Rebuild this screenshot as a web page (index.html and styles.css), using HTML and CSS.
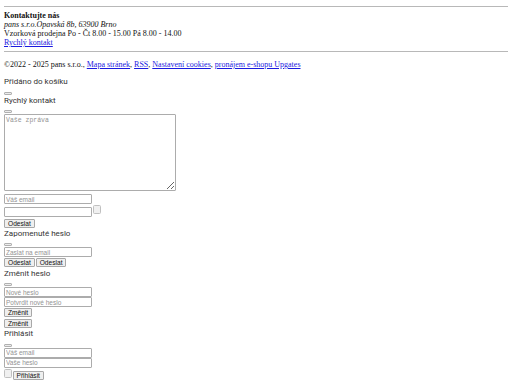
FILE: index.html
```html
<!DOCTYPE html>
<html lang="cs">
<head>
<meta charset="utf-8">
<title>pans s.r.o.</title>
<link rel="stylesheet" href="styles.css">
</head>
<body>
<div class="page">
<hr class="rule rule-top">
<div class="contact">
  <strong>Kontaktujte nás</strong><br>
  <em>pans s.r.o.Opavská 8b, 63900 Brno</em><br>
  Vzorková prodejna Po - Čt 8.00 - 15.00 Pá 8.00 - 14.00<br>
  <a href="#">Rychlý kontakt</a>
</div>
<hr class="rule">
<p class="copy">©2022 - 2025 pans s.r.o., <a href="#">Mapa stránek</a>, <a href="#">RSS</a>, <a href="#">Nastavení cookies</a>, <a href="#">pronájem e-shopu Upgates</a></p>

<div class="ui">
  <section class="modal">
    <div class="modal-title notice">Přidáno do košíku</div>
    <button class="close" type="button"></button>
  </section>

  <section class="modal">
    <div class="modal-title">Rychlý kontakt</div>
    <button class="close" type="button"></button>
    <form class="form form-contact">
      <textarea class="field area" placeholder="Vaše zpráva"></textarea>
      <input class="field f-email" type="text" placeholder="Váš email">
      <div class="row row-check">
        <input class="field" type="text">
        <span class="check"></span>
      </div>
      <div class="row row-send">
        <button class="btn" type="button">Odeslat</button>
      </div>
    </form>
  </section>

  <section class="modal">
    <div class="modal-title">Zapomenuté heslo</div>
    <button class="close" type="button"></button>
    <form class="form">
      <input class="field" type="text" placeholder="Zaslat na email">
      <div class="row row-pair">
        <button class="btn" type="button">Odeslat</button>
        <button class="btn" type="button">Odeslat</button>
      </div>
    </form>
  </section>

  <section class="modal">
    <div class="modal-title">Změnit heslo</div>
    <button class="close" type="button"></button>
    <form class="form">
      <input class="field" type="password" placeholder="Nové heslo">
      <input class="field" type="password" placeholder="Potvrdit nové heslo">
      <div class="row row-change1">
        <button class="btn" type="button">Změnit</button>
      </div>
      <div class="row row-change2">
        <button class="btn" type="button">Změnit</button>
      </div>
    </form>
  </section>

  <section class="modal">
    <div class="modal-title">Přihlásit</div>
    <button class="close" type="button"></button>
    <form class="form">
      <input class="field" type="text" placeholder="Váš email">
      <input class="field" type="password" placeholder="Vaše heslo">
      <div class="row row-login">
        <span class="check"></span>
        <button class="btn btn-login" type="button">Přihlásit</button>
      </div>
    </form>
  </section>
</div>
</div>
</body>
</html>
```

FILE: styles.css
```css
html { background: #fff; }
body {
  margin: 0;
  font-family: "Liberation Serif", "Times New Roman", serif;
  font-size: 8px;
  line-height: 9px;
  color: #111;
}
.page { padding: 6px 4px 4px; }
a { color: #1a1ae0; }

.rule {
  border: 0;
  border-top: 1px solid #b8b8b8;
  height: 0;
  margin: 4px 0;
}
.rule-top { margin-top: 0; }

.contact { line-height: 9px; }
.copy { margin: 8px 0; line-height: 9px; }

.ui {
  font-family: Roboto, "Liberation Sans", Arial, sans-serif;
  color: #333;
}
.modal-title {
  font-size: 8px;
  line-height: 9.4px;
}
.close {
  display: block;
  box-sizing: border-box;
  width: 8px;
  height: 3px;
  margin: 5px 0 1px;
  padding: 0;
  border: 1px solid #b0b0b0;
  border-radius: 1px;
  background: #ececec;
}
.notice + .close { margin-top: 5.5px; }

.form { margin: 0; }
.field {
  display: block;
  box-sizing: border-box;
  width: 88px;
  height: 10px;
  margin: 0;
  padding: 0 1px;
  border: 1px solid #acacac;
  border-radius: 1px;
  background: #fff;
  font-family: "Liberation Sans", Arial, sans-serif;
  font-size: 6.5px;
  color: #000;
  outline: none;
}
.field::placeholder { color: #939393; }

.area {
  width: 172px;
  height: 77px;
  padding: 2px 1px;
  font-family: "Liberation Mono", "Courier New", monospace;
  font-size: 6.5px;
  line-height: 7px;
}
.form-contact .area { margin-top: 1px; }
.form-contact .f-email { margin-top: 3px; }

.row { display: flex; align-items: flex-start; }
.row-check { margin-top: 3px; }
.row-check .check { margin-top: -2px; margin-left: 1px; }
.row-send { margin-top: 1.5px; margin-bottom: 1px; }
.row-pair { margin-top: 1px; margin-bottom: 1.5px; gap: 1px; }
.row-change1 { margin-top: 1px; }
.row-change2 { margin-top: 2px; margin-bottom: 1px; }
.row-login { margin-top: 1px; }

.check {
  display: block;
  box-sizing: border-box;
  width: 8px;
  height: 9px;
  border: 1px solid #c0c0c0;
  border-radius: 1.5px;
  background: #f0f0f0;
}

.btn {
  box-sizing: border-box;
  height: 9px;
  margin: 0;
  padding: 0 3px;
  border: 1px solid #a8a8a8;
  border-radius: 1px;
  background: #efefef;
  font-family: "Liberation Sans", Arial, sans-serif;
  font-size: 6.6px;
  line-height: 7px;
  color: #111;
}
.btn-login { margin-top: 2px; margin-left: 0.5px; }
```
